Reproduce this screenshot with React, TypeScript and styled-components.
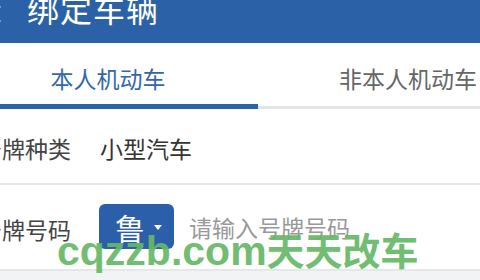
import React, { useState } from 'react'
import styled, { createGlobalStyle } from 'styled-components'

const GlobalStyle = createGlobalStyle`
  html, body {
    margin: 0;
    padding: 0;
    background: #f2f3f5;
    overflow: hidden;
  }
  body {
    font-family: "Noto Sans CJK SC", "Noto Sans", sans-serif;
  }
`

// the screen is wider than the window, the left edge is cut off
const Screen = styled.div`
  position: relative;
  width: 600px;
  margin-left: -42px;
  background: #fff;
`

const Header = styled.div`
  height: 43px;
  background: #2b62a7;
  display: flex;
  align-items: flex-start;
  color: #fff;
`

const BackButton = styled.div`
  width: 44px;
  height: 20px;
  display: flex;
  align-items: center;
  justify-content: flex-end;
  margin-top: 4px;
`

const Title = styled.h1`
  margin: 0 0 0 25px;
  font-size: 32px;
  font-weight: 400;
  line-height: 16px;
  letter-spacing: 1px;
`

const TabBar = styled.div`
  display: flex;
  border-bottom: 3px solid #e2e4e8;
`

const Tab = styled.div<{ $active?: boolean }>`
  flex: 1;
  height: 66px;
  box-sizing: border-box;
  margin-bottom: -3px;
  padding-top: 9px;
  display: flex;
  align-items: center;
  justify-content: center;
  font-size: 23px;
  color: ${(p) => (p.$active ? '#3467a9' : '#666')};
  border-bottom: 5px solid ${(p) => (p.$active ? '#2b62a7' : 'transparent')};
  cursor: pointer;
`

const Row = styled.div<{ $height: number }>`
  height: ${(p) => p.$height}px;
  box-sizing: border-box;
  display: flex;
  align-items: center;
  padding: 4px 0 0 21px;
  border-bottom: 2px solid #e6e7ea;
  font-size: 23px;
`

const Label = styled.span`
  width: 92px;
  margin-right: 29px;
  color: #444;
`

const Value = styled.span`
  color: #333;
`

const ProvinceButton = styled.button`
  width: 75px;
  height: 45px;
  margin: -5px 15px 0 -1px;
  border: none;
  border-radius: 6px;
  background: #2c5fa9;
  color: #fff;
  display: flex;
  align-items: center;
  justify-content: center;
  gap: 9px;
  font-family: inherit;
  font-size: 30px;
  padding: 0 0 0 4px;
`

const Caret = styled.span`
  width: 0;
  height: 0;
  border-left: 4.5px solid transparent;
  border-right: 4.5px solid transparent;
  border-top: 5px solid #fff;
  margin-top: 2px;
`

const PlateInput = styled.input`
  border: none;
  outline: none;
  font-family: inherit;
  font-size: 23px;
  color: #333;
  width: 260px;
  padding: 0;
  margin-top: -4px;
  &::placeholder {
    color: #999;
  }
`

const Footer = styled.div`
  height: 40px;
  background: #f2f3f5;
`

const Watermark = styled.div`
  position: absolute;
  left: 99px;
  top: 230px;
  font-family: "Liberation Sans", "Noto Sans CJK SC", sans-serif;
  font-weight: 700;
  font-size: 41px;
  line-height: 1;
  color: #66b866;
  opacity: 0.92;
  pointer-events: none;
  white-space: nowrap;
`

const WatermarkCn = styled.span`
  font-family: "Noto Sans CJK SC", sans-serif;
  font-size: 38px;
`

const App: React.FC = () => {
  const [tab, setTab] = useState(0)
  const [plate, setPlate] = useState('')

  return (
    <>
      <GlobalStyle />
      <Screen>
        <Header>
          <BackButton>
            <svg width="14" height="20" viewBox="0 0 14 20">
              <path d="M12 2 L3 10 L12 18" fill="none" stroke="#fff" strokeWidth="2.5" />
            </svg>
          </BackButton>
          <Title>绑定车辆</Title>
        </Header>
        <TabBar>
          <Tab $active={tab === 0} onClick={() => setTab(0)}>本人机动车</Tab>
          <Tab $active={tab === 1} onClick={() => setTab(1)}>非本人机动车</Tab>
        </TabBar>
        <Row $height={76}>
          <Label>号牌种类</Label>
          <Value>小型汽车</Value>
        </Row>
        <Row $height={86}>
          <Label>号牌号码</Label>
          <ProvinceButton>
            鲁<Caret />
          </ProvinceButton>
          <PlateInput
            value={plate}
            onChange={(e) => setPlate(e.target.value)}
            placeholder="请输入号牌号码"
          />
        </Row>
        <Footer />
        <Watermark>
          cqzzb.com<WatermarkCn>天天改车</WatermarkCn>
        </Watermark>
      </Screen>
    </>
  )
}

export default App
